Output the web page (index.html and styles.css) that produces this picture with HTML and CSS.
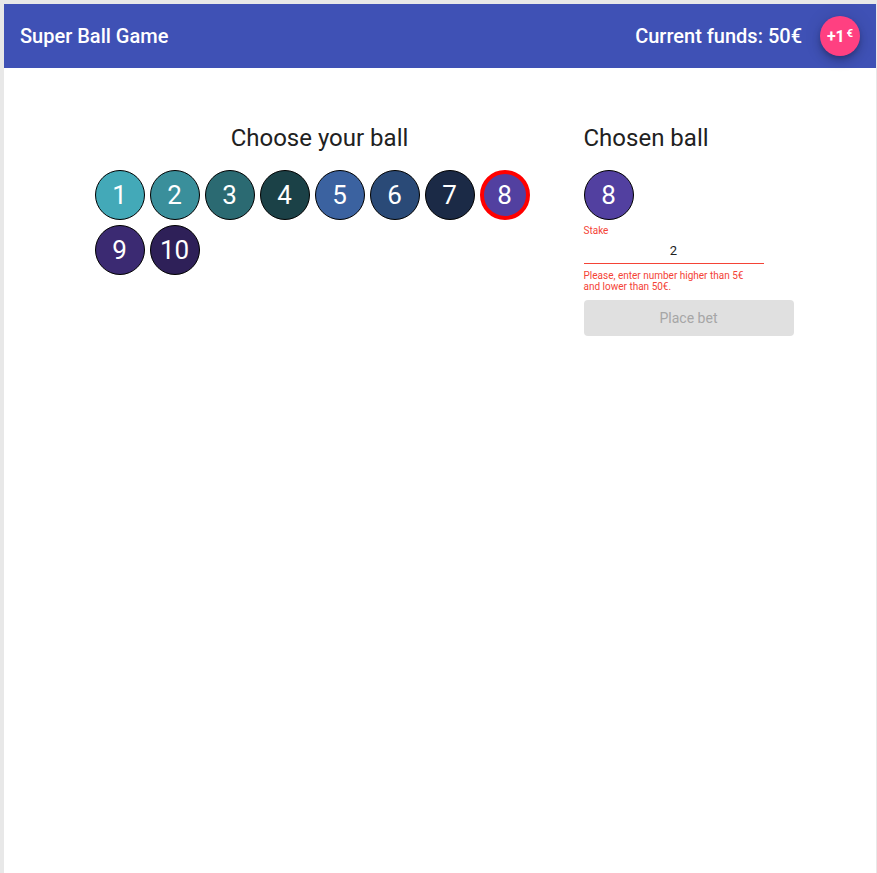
FILE: index.html
```html
<!DOCTYPE html>
<html>
<head>
<meta charset="utf-8">
<title>Super Ball Game</title>
<link rel="stylesheet" href="styles.css">
</head>
<body>
<div class="app">
  <header class="toolbar">
    <span class="brand">Super Ball Game</span>
    <span class="spacer"></span>
    <span class="funds">Current funds: 50€</span>
    <button class="fab">+1<span class="cur">€</span></button>
  </header>
  <main class="content">
    <section class="picker">
      <h2 class="title">Choose your ball</h2>
      <div class="balls">
        <div class="ball b1">1</div>
        <div class="ball b2">2</div>
        <div class="ball b3">3</div>
        <div class="ball b4">4</div>
        <div class="ball b5">5</div>
        <div class="ball b6">6</div>
        <div class="ball b7">7</div>
        <div class="ball b8 selected">8</div>
        <div class="ball b9">9</div>
        <div class="ball b10">10</div>
      </div>
    </section>
    <section class="chosen">
      <h2 class="title">Chosen ball</h2>
      <div class="ball b8">8</div>
      <label class="stake-label">Stake</label>
      <div class="field">
        <input class="stake" type="text" value="2">
      </div>
      <div class="error">Please, enter number higher than 5€<br>and lower than 50€.</div>
      <button class="place" disabled>Place bet</button>
    </section>
  </main>
</div>
</body>
</html>
```
FILE: styles.css
```css
html {
  background: #e8e8e8;
}
body {
  margin: 4px 1px 0 4px;
  background: #ffffff;
  min-height: 869px;
  font-family: Roboto, "Liberation Sans", sans-serif;
  color: #212121;
}
.toolbar {
  height: 64px;
  background: #3f51b5;
  color: #ffffff;
  display: flex;
  align-items: center;
  padding: 0 16px;
}
.brand {
  font-size: 20px;
  font-weight: 500;
}
.spacer {
  flex: 1;
}
.funds {
  font-size: 20px;
  font-weight: 500;
  margin-right: 18px;
}
.fab {
  width: 40px;
  height: 40px;
  border-radius: 50%;
  border: none;
  background: #ff4081;
  color: #ffffff;
  font-family: Roboto, "Liberation Sans", sans-serif;
  font-size: 16px;
  font-weight: 700;
  padding: 0;
  display: flex;
  align-items: center;
  justify-content: center;
  box-shadow: 0 3px 5px -1px rgba(0,0,0,.2), 0 6px 10px 0 rgba(0,0,0,.14), 0 1px 18px 0 rgba(0,0,0,.12);
}
.cur {
  font-size: 11px;
  margin-left: 2px;
  position: relative;
  top: -3px;
}
.content {
  display: flex;
  justify-content: center;
  gap: 39px;
  padding: 56px 0 0 8px;
}
.picker {
  width: 450px;
}
.chosen {
  width: 210px;
}
.title {
  margin: 0 0 18px;
  font-size: 24px;
  font-weight: 400;
  line-height: 28px;
  color: #212121;
}
.picker .title {
  text-align: center;
}
.balls {
  display: flex;
  flex-wrap: wrap;
  gap: 5px;
}
.ball {
  box-sizing: border-box;
  width: 50px;
  height: 50px;
  border-radius: 50%;
  border: 1px solid #000000;
  color: #ffffff;
  font-size: 26px;
  display: flex;
  align-items: center;
  justify-content: center;
}
.ball.selected {
  border: 4px solid #ff0000;
}
.b1 { background: #43a9b8; }
.b2 { background: #3a8f9b; }
.b3 { background: #2b6a72; }
.b4 { background: #1b4147; }
.b5 { background: #3b62a0; }
.b6 { background: #2a4a77; }
.b7 { background: #1b2a46; }
.b8 { background: #5240a0; }
.b9 { background: #3b2a72; }
.b10 { background: #2e2058; }
.stake-label {
  display: block;
  margin-top: 5px;
  font-size: 10px;
  line-height: 12px;
  color: #f44336;
}
.field {
  width: 180px;
  border-bottom: 1px solid #f44336;
  padding: 3px 0 4px;
}
.stake {
  width: 100%;
  border: none;
  outline: none;
  padding: 0;
  background: transparent;
  text-align: center;
  font-family: Roboto, "Liberation Sans", sans-serif;
  font-size: 13px;
  line-height: 16px;
  color: #212121;
}
.error {
  margin-top: 6px;
  font-size: 10px;
  line-height: 11px;
  color: #f44336;
}
.place {
  margin-top: 8px;
  width: 210px;
  height: 36px;
  border: none;
  border-radius: 4px;
  background: #e0e0e0;
  color: #a6a6a6;
  font-family: Roboto, "Liberation Sans", sans-serif;
  font-size: 14px;
}
```
